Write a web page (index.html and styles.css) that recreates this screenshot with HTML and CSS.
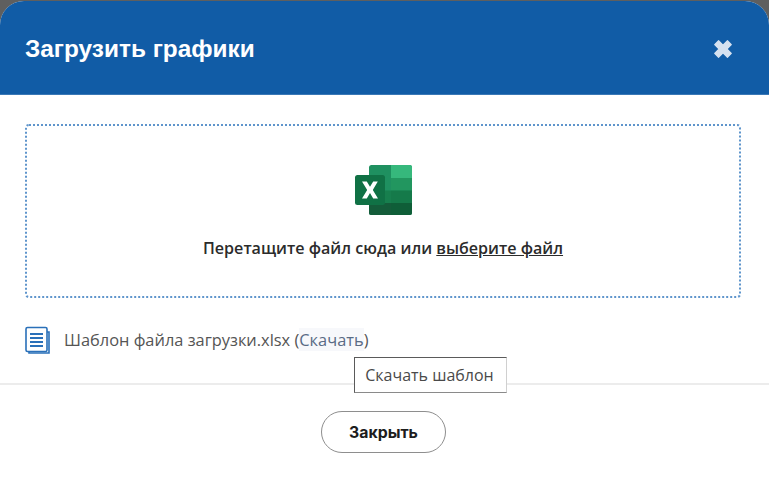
FILE: index.html
```html
<!DOCTYPE html>
<html lang="ru">
<head>
<meta charset="utf-8">
<title>Загрузить графики</title>
<link rel="stylesheet" href="styles.css">
</head>
<body>
<div class="modal">
  <header class="head">
    <h1 class="title">Загрузить графики</h1>
    <svg class="close" width="20" height="20" viewBox="0 0 18 18"><path d="M5 1.500 9 5.500l4-4 3.500 3.500-4 4 4 4L13 16.500l-4-4-4 4L1.500 13l4-4-4-4z" fill="#d5e1f0" stroke="#d5e1f0" stroke-width="1" stroke-linejoin="round"/></svg>
  </header>
  <section class="content">
    <div class="drop">
      <svg class="xl" width="60" height="52" viewBox="0 0 60 52">
        <rect x="15" y="1" width="43" height="50" rx="2.500" fill="#1f9060"/>
        <path d="M37 1h19a2 2 0 0 1 2 2v11H37z" fill="#36b87c"/>
        <rect x="37" y="14" width="21" height="12.500" fill="#22965f"/>
        <rect x="37" y="26.500" width="21" height="12.500" fill="#157a4a"/>
        <path d="M37 39h21v10a2 2 0 0 1-2 2H37z" fill="#0f5e38"/>
        <path d="M15 26.500h22V39H15z" fill="#177f4e"/>
        <path d="M15 39h22v12H17a2 2 0 0 1-2-2z" fill="#145c3a"/>
        <rect x="1" y="11" width="30" height="30" rx="2.500" fill="#107145"/>
        <path d="M8 17.500h4.800l3.200 5.300 3.200-5.300h4.600L18.800 26l5.200 8.500h-4.800l-3.200-5.500-3.200 5.500H8l5.200-8.500z" fill="#fff"/>
      </svg>
      <p class="hint">Перетащите файл сюда или <a class="pick">выберите файл</a></p>
    </div>
    <div class="file">
      <svg width="26" height="29" viewBox="0 0 26 29" fill="none" stroke="#2a70b9" stroke-width="1.600">
        <path d="M4 25v2h20V6h-2"/>
        <rect x="1" y="1.500" width="21" height="24" rx="1.500" fill="#fff"/>
        <path d="M5 8h13M5 12h13M5 16h13M5 20h13" stroke-width="1.800"/>
      </svg>
      <span class="name">Шаблон файла загрузки.xlsx (<span class="dl">Скачать</span>)</span>
    </div>
  </section>
  <footer class="foot">
    <button class="btn" type="button">Закрыть</button>
  </footer>
  <div class="tip">Скачать шаблон</div>
</div>
</body>
</html>
```

FILE: styles.css
```css
* { box-sizing: border-box; }
html, body { margin: 0; height: 100%; }
body { background: #5f5f5f; overflow: hidden; }
.modal {
  position: relative;
  height: 481px;
  background: #fff;
  border-radius: 24px 24px 0 0;
  overflow: hidden;
  margin-top: 1px;
  font-family: "Open Sans", "Noto Sans", sans-serif;
}
.head {
  height: 94px;
  background: #115ca6;
  border-bottom: 1px solid #3a78b6;
  display: flex;
  align-items: center;
  justify-content: space-between;
  padding: 2px 36px 0 25px;
}
.title {
  margin: 0;
  font: bold 24.400px "Liberation Sans", Arial, sans-serif;
  color: #fff;
}
.content { padding: 29px 28px 0 25px; }
.drop {
  height: 174px;
  border: 2px dotted #5f95cc;
  border-radius: 4px;
  display: flex;
  flex-direction: column;
  align-items: center;
  padding-top: 38px;
}
.xl { display: block; margin-left: 2px; }
.hint {
  margin: 22px 0 0;
  font-size: 16.100px;
  font-weight: 600;
  color: #2b2b2b;
  line-height: 21px;
}
.pick { text-decoration: underline; }
.file {
  display: flex;
  align-items: center;
  gap: 13px;
  margin-top: 28px;
  height: 29px;
}
.name { font-size: 16.400px; color: #555; position: relative; top: -1px; }
.dl { color: #5a6b85; background: #f7f8fb; }
.foot {
  margin-top: 28px;
  border-top: 2px solid #ececec;
  display: flex;
  justify-content: center;
  padding: 26px 2px 0 0;
}
.btn {
  width: 125px;
  height: 42px;
  background: #fff;
  border: 1px solid #8e8e8e;
  border-radius: 21px;
  font: 700 15.800px Inter, "Noto Sans", sans-serif;
  color: #1d1d1d;
  padding: 0;
}
.tip {
  position: absolute;
  left: 354px;
  top: 356px;
  width: 153px;
  height: 36px;
  background: #fff;
  border: 1px solid #5a5a5a;
  border-color: #5a5a5a #d0d0d0 #8a8a8a #5a5a5a;
  display: flex;
  align-items: center;
  justify-content: center;
  padding-right: 2px;
  font-size: 16px;
  color: #4a4a4a;
}
```
